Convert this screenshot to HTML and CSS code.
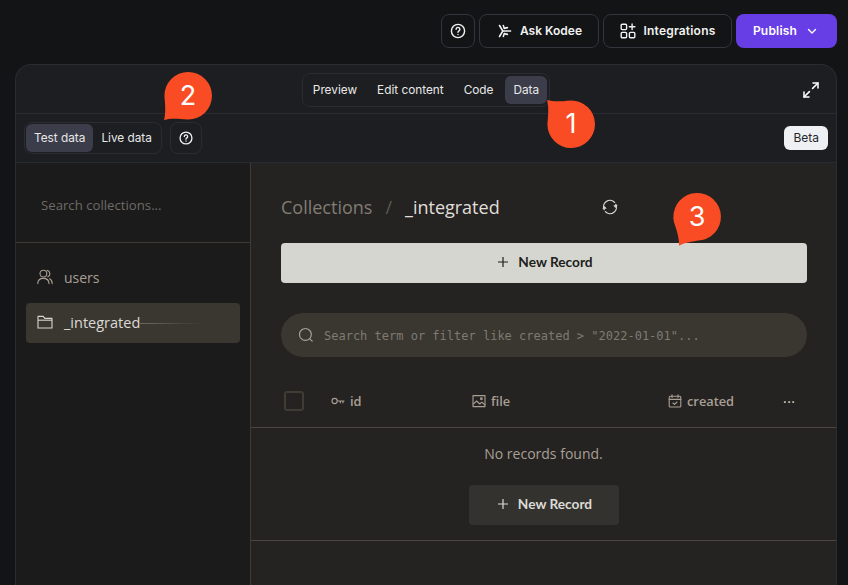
FILE: index.html
```html
<!DOCTYPE html>
<html lang="en">
<head>
  <meta charset="UTF-8">
  <meta name="viewport" content="width=device-width, initial-scale=1.0">
  <title>Data</title>
  <link rel="stylesheet" href="styles.css">
</head>
<body>
  <header class="topbar">
    <button class="top-btn icon-only">
      <svg width="16" height="16" viewBox="0 0 16 16" fill="none" stroke="#f1f1f1" stroke-width="1.4" stroke-linecap="round"><circle cx="8" cy="8" r="6.6"/><path d="M6.1 6.3a1.9 1.9 0 1 1 2.9 1.6c-.6.4-1 .7-1 1.4"/><path d="M8 11.4v.1"/></svg>
    </button>
    <button class="top-btn kodee">
      <svg width="14" height="14" viewBox="0 0 14 14" fill="none" stroke="#f1f1f1" stroke-width="1.6" stroke-linecap="round" stroke-linejoin="round"><path d="M1.5 1.5 4.8 7 1.5 12.5"/><path d="M4.8 7H12.6"/><path d="M5.4 1.6 6.2 4.4 9.4 3.6"/><path d="M5.4 12.4 6.2 9.6 9.4 10.4"/></svg>
      Ask Kodee
    </button>
    <button class="top-btn integrations">
      <svg width="16" height="16" viewBox="0 0 16 16" fill="none" stroke="#f1f1f1" stroke-width="1.4" stroke-linecap="round"><rect x="1.2" y="1.2" width="5.4" height="5.4" rx="1"/><rect x="1.2" y="9.4" width="5.4" height="5.4" rx="1"/><rect x="9.4" y="9.4" width="5.4" height="5.4" rx="1"/><path d="M12.1 1v5.6M9.3 3.8h5.6"/></svg>
      Integrations
    </button>
    <button class="top-btn publish">
      Publish
      <svg width="12" height="12" viewBox="0 0 12 12" fill="none" stroke="#fff" stroke-width="1.4" stroke-linecap="round" stroke-linejoin="round"><path d="M2.5 4.5 6 8l3.5-3.5"/></svg>
    </button>
  </header>

  <div class="panel">
    <div class="tabs-row">
      <div class="segment view-tabs">
        <span class="seg-item">Preview</span>
        <span class="seg-item">Edit content</span>
        <span class="seg-item">Code</span>
        <span class="seg-item active">Data</span>
      </div>
      <svg class="expand" width="16" height="16" viewBox="0 0 16 16" fill="none" stroke="#fff" stroke-width="1.5" stroke-linecap="round" stroke-linejoin="round"><path d="M10 1h5v5"/><path d="M15 1 9.6 6.4"/><path d="M1 10v5h5"/><path d="M1 15l5.4-5.4"/></svg>
    </div>

    <div class="data-row">
      <div class="segment">
        <span class="seg-item">Test data</span>
        <span class="seg-item">Live data</span>
      </div>
      <button class="help-btn">
        <svg width="14" height="14" viewBox="0 0 16 16" fill="none" stroke="#f1f1f1" stroke-width="1.5" stroke-linecap="round"><circle cx="8" cy="8" r="6.8"/><path d="M6.1 6.3a1.9 1.9 0 1 1 2.9 1.6c-.6.4-1 .7-1 1.4"/><path d="M8 11.4v.1"/></svg>
      </button>
      <span class="beta">Beta</span>
    </div>

    <div class="admin">
      <aside class="sidebar">
        <div class="side-search">Search collections...</div>
        <nav class="side-list">
          <div class="side-item">
            <svg width="16" height="16" viewBox="0 0 16 16" fill="none" stroke="#a99f95" stroke-width="1.1" stroke-linecap="round"><circle cx="6.4" cy="4.6" r="3.4"/><path d="M.8 14.6c0-3.2 2.4-5.2 5.6-5.2s5.6 2 5.6 5.2"/><path d="M10.2 1.4a3.3 3.3 0 0 1 .6 6.3"/><path d="M12.6 9.8c1.6.8 2.6 2.5 2.6 4.8"/></svg>
            users
          </div>
          <div class="side-item active">
            <svg width="16" height="16" viewBox="0 0 16 16" fill="none" stroke="#d8d6d0" stroke-width="1.1" stroke-linejoin="round"><path d="M1 14V2.4h5.2l1.6 2H15V14z"/><path d="M1 6.2h14"/></svg>
            _integrated
            <span class="trail"></span>
          </div>
        </nav>
      </aside>

      <main class="content">
        <div class="crumbs">
          <span class="crumb-muted">Collections</span>
          <span class="crumb-sep">/</span>
          <span class="crumb-current">_integrated</span>
          <svg class="refresh" width="16" height="16" viewBox="0 0 16 16" fill="none" stroke="#dcdad5" stroke-width="1.3" stroke-linecap="round"><path d="M2.2 10.6A6.4 6.4 0 0 1 12.6 3.4"/><path d="M13.8 5.4A6.4 6.4 0 0 1 3.4 12.6"/><path d="M14.8 6.6h-3l1.5 1.9zM1.2 9.4h3L2.7 7.5z" fill="#dcdad5" stroke-width=".6"/></svg>
        </div>

        <button class="record-btn primary">
          <svg width="12" height="12" viewBox="0 0 12 12" stroke="#1e1e1c" stroke-width="1.2"><path d="M6 1v10M1 6h10"/></svg>
          New Record
        </button>

        <div class="filter">
          <svg width="16" height="16" viewBox="0 0 16 16" fill="none" stroke="#a99f95" stroke-width="1.2" stroke-linecap="round"><circle cx="7.4" cy="7.4" r="5.9"/><path d="M11.8 11.8l2.4 2.4"/></svg>
          <span class="filter-text">Search term or filter like created &gt; "2022-01-01"...</span>
        </div>

        <div class="table-head">
          <span class="check"></span>
          <div class="col col-id">
            <svg width="14" height="14" viewBox="0 0 14 14" fill="none" stroke="#a99f95" stroke-width="1.1"><circle cx="3.6" cy="7" r="2.6"/><path d="M6.2 7h7.2M9.4 7v2.2M12 7v2.2"/></svg>
            id
          </div>
          <div class="col col-file">
            <svg width="14" height="14" viewBox="0 0 14 14" fill="none" stroke="#a99f95" stroke-width="1.1" stroke-linejoin="round"><rect x="1" y="1.6" width="12" height="11"/><path d="M1 10.4 4.6 7l3.2 3 2-1.8 3.2 2.8"/><circle cx="9.4" cy="4.8" r=".9"/></svg>
            file
          </div>
          <div class="col col-created">
            <svg width="14" height="14" viewBox="0 0 14 14" fill="none" stroke="#a99f95" stroke-width="1.1" stroke-linecap="round" stroke-linejoin="round"><rect x="1.2" y="2.2" width="11.6" height="10.8" rx="1"/><path d="M1.2 5.4h11.6M4 .8v2.6M10 .8v2.6M5 9l1.5 1.4L9 8"/></svg>
            created
          </div>
          <span class="more">&middot;&middot;&middot;</span>
        </div>

        <div class="empty">
          <p class="empty-text">No records found.</p>
          <button class="record-btn secondary">
            <svg width="12" height="12" viewBox="0 0 12 12" stroke="#dcdad5" stroke-width="1.2"><path d="M6 1v10M1 6h10"/></svg>
            New Record
          </button>
        </div>
      </main>
    </div>
  </div>

  <div class="bubble bubble-1">
    <svg width="48" height="48" viewBox="0 0 48 48"><path d="M0 0C6 1.6 12 1.6 24 .4A23.8 23.8 0 1 1 .4 24C1.6 12 1.6 6 0 0Z" fill="#f94c24"/></svg>
    <span>1</span>
  </div>
  <div class="bubble bubble-2">
    <svg width="48" height="48" viewBox="0 0 48 48"><path d="M0 0C6 1.6 12 1.6 24 .4A23.8 23.8 0 1 1 .4 24C1.6 12 1.6 6 0 0Z" fill="#f94c24"/></svg>
    <span>2</span>
  </div>
  <div class="bubble bubble-3">
    <svg width="48" height="48" viewBox="0 0 48 48"><path d="M0 0C6 1.6 12 1.6 24 .4A23.8 23.8 0 1 1 .4 24C1.6 12 1.6 6 0 0Z" fill="#f94c24"/></svg>
    <span>3</span>
  </div>
</body>
</html>
```

FILE: styles.css
```css
* {
  box-sizing: border-box;
}
html, body {
  height: 100%;
}
body {
  margin: 0;
  background-color: #131415;
  font-family: Inter, "Liberation Sans", sans-serif;
  color: #f1f1f1;
  overflow: hidden;
  position: relative;
}
button {
  font-family: inherit;
  cursor: pointer;
}

/* top bar */
.topbar {
  display: flex;
  justify-content: flex-end;
  gap: 4px;
  height: 64px;
  padding: 14px 11px 0 0;
}
.top-btn {
  display: flex;
  align-items: center;
  justify-content: center;
  gap: 8px;
  height: 34px;
  padding: 0 0 1px;
  border: 1px solid #33353c;
  border-radius: 8px;
  background-color: #131415;
  color: #f1f1f1;
  font-size: 12px;
  font-weight: 600;
  letter-spacing: 0.2px;
}
.icon-only {
  width: 34px;
}
.kodee {
  width: 120px;
  padding-left: 2px;
  letter-spacing: 0;
}
.integrations {
  width: 129px;
}
.publish {
  width: 101px;
  gap: 9px;
  padding-right: 2px;
  border: none;
  background-color: #673de6;
  color: #fff;
}

/* panel */
.panel {
  display: flex;
  flex-direction: column;
  height: 521px;
  margin: 0 11px 0 15px;
  border: 1px solid #2a2c33;
  border-bottom: none;
  border-radius: 16px 16px 0 0;
  background-color: #1d1e21;
  overflow: hidden;
}
.tabs-row {
  display: flex;
  align-items: center;
  justify-content: center;
  position: relative;
  height: 49px;
  padding-top: 1px;
  border-bottom: 1px solid #2a2c33;
}
.expand {
  position: absolute;
  right: 17px;
  top: 17px;
}
.segment {
  display: flex;
  padding: 1px;
  border: 1px solid #2a2c33;
  border-radius: 8px;
}
.view-tabs {
  gap: 4px;
  padding: 2px;
}
.seg-item {
  display: flex;
  align-items: center;
  height: 28px;
  padding: 0 8px;
  border-radius: 6px;
  color: #e8e8e8;
  font-size: 11.8px;
}
.seg-item.active,
.data-row .seg-item:first-child {
  background-color: #3c3d4a;
}
.data-row {
  display: flex;
  align-items: center;
  gap: 8px;
  height: 49px;
  padding: 0 8px;
  border-bottom: 1px solid #2a2c33;
}
.help-btn {
  display: flex;
  align-items: center;
  justify-content: center;
  width: 32px;
  height: 32px;
  padding: 0;
  border: 1px solid #2a2c33;
  border-radius: 8px;
  background: transparent;
}
.beta {
  margin-left: auto;
  padding: 0 9px;
  height: 24px;
  line-height: 24px;
  border-radius: 6px;
  background-color: #eff0f3;
  color: #26272b;
  font-size: 12px;
}

/* collections admin */
.admin {
  display: flex;
  flex: 1;
  min-height: 0;
  font-family: "Open Sans", "Noto Sans", sans-serif;
}
.sidebar {
  width: 235px;
  flex-shrink: 0;
  border-right: 1px solid #3f3a34;
  background-color: #1b1b1b;
}
.side-search {
  display: flex;
  align-items: center;
  height: 80px;
  padding: 4px 0 0 25px;
  border-bottom: 1px solid #3f3a34;
  color: #6f6a64;
  font-size: 13.2px;
}
.side-list {
  display: flex;
  flex-direction: column;
  padding: 10px 10px 0;
}
.side-item {
  display: flex;
  align-items: center;
  gap: 11px;
  height: 40px;
  margin-top: 5px;
  padding: 0 11px 2px;
  border-radius: 4px;
  color: #a99f95;
  font-size: 14px;
}
.side-item.active {
  background-color: #3a3630;
  color: #dcdad5;
  font-size: 14.5px;
}
.trail {
  width: 62px;
  height: 1px;
  margin: 3px 0 0 -11px;
  background: linear-gradient(to right, #6d685f, rgba(109, 104, 95, 0));
}
.content {
  flex: 1;
  padding: 0 29px 0 30px;
  background-color: #242321;
}
.crumbs {
  display: flex;
  align-items: center;
  height: 80px;
  padding-top: 8px;
  font-size: 18px;
}
.crumb-muted {
  color: #827c74;
}
.crumb-sep {
  margin: 0 13px;
  color: #5e5a54;
}
.crumb-current {
  color: #e0deda;
}
.refresh {
  margin-left: 102px;
}
.record-btn {
  display: flex;
  align-items: center;
  justify-content: center;
  gap: 9px;
  height: 40px;
  padding: 0 0 3px 2px;
  border: none;
  border-radius: 4px;
  font-family: Lato, "Open Sans", sans-serif;
  font-size: 13.7px;
  font-weight: 700;
}
.record-btn.primary {
  width: 100%;
  background-color: #d5d6d0;
  color: #1e1e1c;
}
.record-btn.secondary {
  width: 150px;
  background-color: #33322e;
  color: #dcdad5;
}
.filter {
  display: flex;
  align-items: center;
  gap: 10px;
  height: 44px;
  margin-top: 30px;
  padding: 0 17px;
  border-radius: 22px;
  background-color: #3a3630;
  color: #7f7a72;
  font-family: "DejaVu Sans Mono", "Liberation Mono", monospace;
  font-size: 12px;
}
.filter-text {
  padding-top: 2px;
}
.table-head {
  display: flex;
  align-items: center;
  height: 71px;
  margin: 0 -29px 0 -30px;
  padding: 18px 0 0 33px;
  border-bottom: 1px solid #4a453e;
  color: #a99f95;
  font-size: 12.8px;
  font-weight: 600;
}
.check {
  width: 20px;
  height: 20px;
  border: 2px solid #3f3c36;
  border-radius: 3px;
}
.col {
  display: flex;
  align-items: center;
  gap: 5px;
}
.col-id {
  margin-left: 27px;
  width: 141px;
}
.col-file {
  width: 196px;
}
.col-created {
  width: 115px;
}
.more {
  color: #dcdad5;
  font-size: 14px;
  font-weight: 400;
  letter-spacing: 0.5px;
}
.empty {
  display: flex;
  flex-direction: column;
  align-items: center;
  margin: 0 -29px 0 -30px;
  height: 113px;
  border-bottom: 1px solid #4a453e;
}
.empty-text {
  margin: 16px 0 0;
  height: 41px;
  color: #a99f95;
  font-size: 14px;
}

/* numbered callouts over the screenshot */
.bubble {
  position: absolute;
  width: 48px;
  height: 48px;
}
.bubble svg {
  display: block;
  overflow: visible;
}
.bubble span {
  position: absolute;
  left: 0;
  right: 0;
  top: 0;
  line-height: 48px;
  text-align: center;
  color: #fff;
  font-size: 27px;
  font-weight: 400;
}
.bubble-1 {
  left: 547px;
  top: 100px;
}
.bubble-2 {
  left: 164px;
  top: 72px;
}
.bubble-2 svg {
  transform: rotate(-90deg);
}
.bubble-3 {
  left: 673px;
  top: 193px;
}
.bubble-3 svg {
  transform: rotate(-103deg);
}
```
